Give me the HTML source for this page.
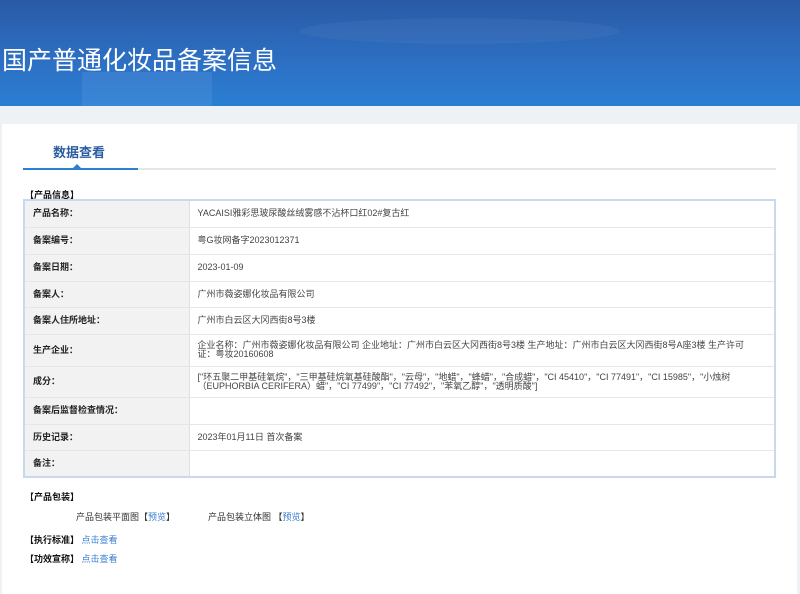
<!DOCTYPE html>
<html><head><meta charset="utf-8"><style>
*{margin:0;padding:0;box-sizing:border-box}
body{width:800px;height:590px;overflow:hidden;background:#eef2f5;font-family:"Liberation Sans","Noto Sans CJK SC",sans-serif;font-size:9px;color:#333;position:relative}
.hdr{position:absolute;left:0;top:0;width:800px;height:106px;background:linear-gradient(180deg,#2a5aa6 0%,#2d70c4 60%,#2a7fd3 100%);overflow:hidden}
.hdr .g1{position:absolute;left:82px;top:72px;width:130px;height:34px;background:rgba(120,170,240,.18)}
.hdr .g2{position:absolute;left:300px;top:18px;width:320px;height:26px;border-radius:50%;background:rgba(255,255,255,.04)}
.hdr h1{position:absolute;left:2px;top:41px;font-size:25px;font-weight:normal;color:#fff;font-family:"Liberation Sans","Noto Sans CJK SC",sans-serif}
.card{position:absolute;left:2px;top:124px;width:795px;height:470px;background:#fff}
.tab{position:absolute;left:53px;top:142px;font-size:13px;font-weight:bold;color:#2a5da0}
.tl{position:absolute;left:23px;top:168px;width:753px;height:2px;background:#e3e6ea}
.tb{position:absolute;left:23px;top:168px;width:115px;height:2px;background:#2f7fd0}
.tri{position:absolute;left:73px;top:164px;width:0;height:0;border-left:4px solid transparent;border-right:4px solid transparent;border-bottom:4px solid #2f7fd0}
.sec{position:absolute;left:25px;font-weight:bold;color:#111;font-size:9px}
table{position:absolute;left:23px;top:199px;width:753px;border-collapse:collapse;border:2px solid #c9d9ec}
td{border-bottom:1px solid #e6e6e6;vertical-align:middle;line-height:9px}
td.l{width:165px;background:#f2f2f2;font-weight:bold;padding-left:8px;border-right:1px solid #e0e0e0;color:#222}
td.v{padding-left:8px;padding-right:12px;color:#444}
a{color:#3a7fd0;text-decoration:none}
</style></head><body>
<div class="hdr"><div class="g1"></div><div class="g2"></div><h1>国产普通化妆品备案信息</h1></div>
<div class="card"></div>
<div class="tab">数据查看</div>
<div class="tl"></div><div class="tb"></div><div class="tri"></div>
<div class="sec" style="top:188px">【产品信息】</div>
<table>
<tr style="height:27px"><td class="l">产品名称：</td><td class="v">YACAISI雅彩思玻尿酸丝绒雾感不沾杯口红02#复古红</td></tr>
<tr style="height:27px"><td class="l">备案编号：</td><td class="v">粤G妆网备字2023012371</td></tr>
<tr style="height:27px"><td class="l">备案日期：</td><td class="v">2023-01-09</td></tr>
<tr style="height:26px"><td class="l">备案人：</td><td class="v">广州市薇姿娜化妆品有限公司</td></tr>
<tr style="height:27px"><td class="l">备案人住所地址：</td><td class="v">广州市白云区大冈西街8号3楼</td></tr>
<tr style="height:32px"><td class="l">生产企业：</td><td class="v">企业名称：广州市薇姿娜化妆品有限公司 企业地址：广州市白云区大冈西街8号3楼 生产地址：广州市白云区大冈西街8号A座3楼 生产许可证：粤妆20160608</td></tr>
<tr style="height:31px"><td class="l">成分：</td><td class="v">["环五聚二甲基硅氧烷"，"三甲基硅烷氧基硅酸酯"，"云母"，"地蜡"，"蜂蜡"，"合成蜡"，"CI 45410"，"CI 77491"，"CI 15985"，"小烛树（EUPHORBIA CERIFERA）蜡"，"CI 77499"，"CI 77492"，"苯氧乙醇"，"透明质酸"]</td></tr>
<tr style="height:27px"><td class="l">备案后监督检查情况：</td><td class="v"></td></tr>
<tr style="height:26px"><td class="l">历史记录：</td><td class="v">2023年01月11日 首次备案</td></tr>
<tr style="height:27px"><td class="l">备注：</td><td class="v"></td></tr>
</table>
<div class="sec" style="top:490px">【产品包装】</div>
<div style="position:absolute;left:76px;top:510px">产品包装平面图【<a>预览</a>】</div>
<div style="position:absolute;left:208px;top:510px">产品包装立体图 【<a>预览</a>】</div>
<div class="sec" style="top:533px">【执行标准】 <a style="font-weight:normal">点击查看</a></div>
<div class="sec" style="top:552px">【功效宣称】 <a style="font-weight:normal">点击查看</a></div>
</body></html>
